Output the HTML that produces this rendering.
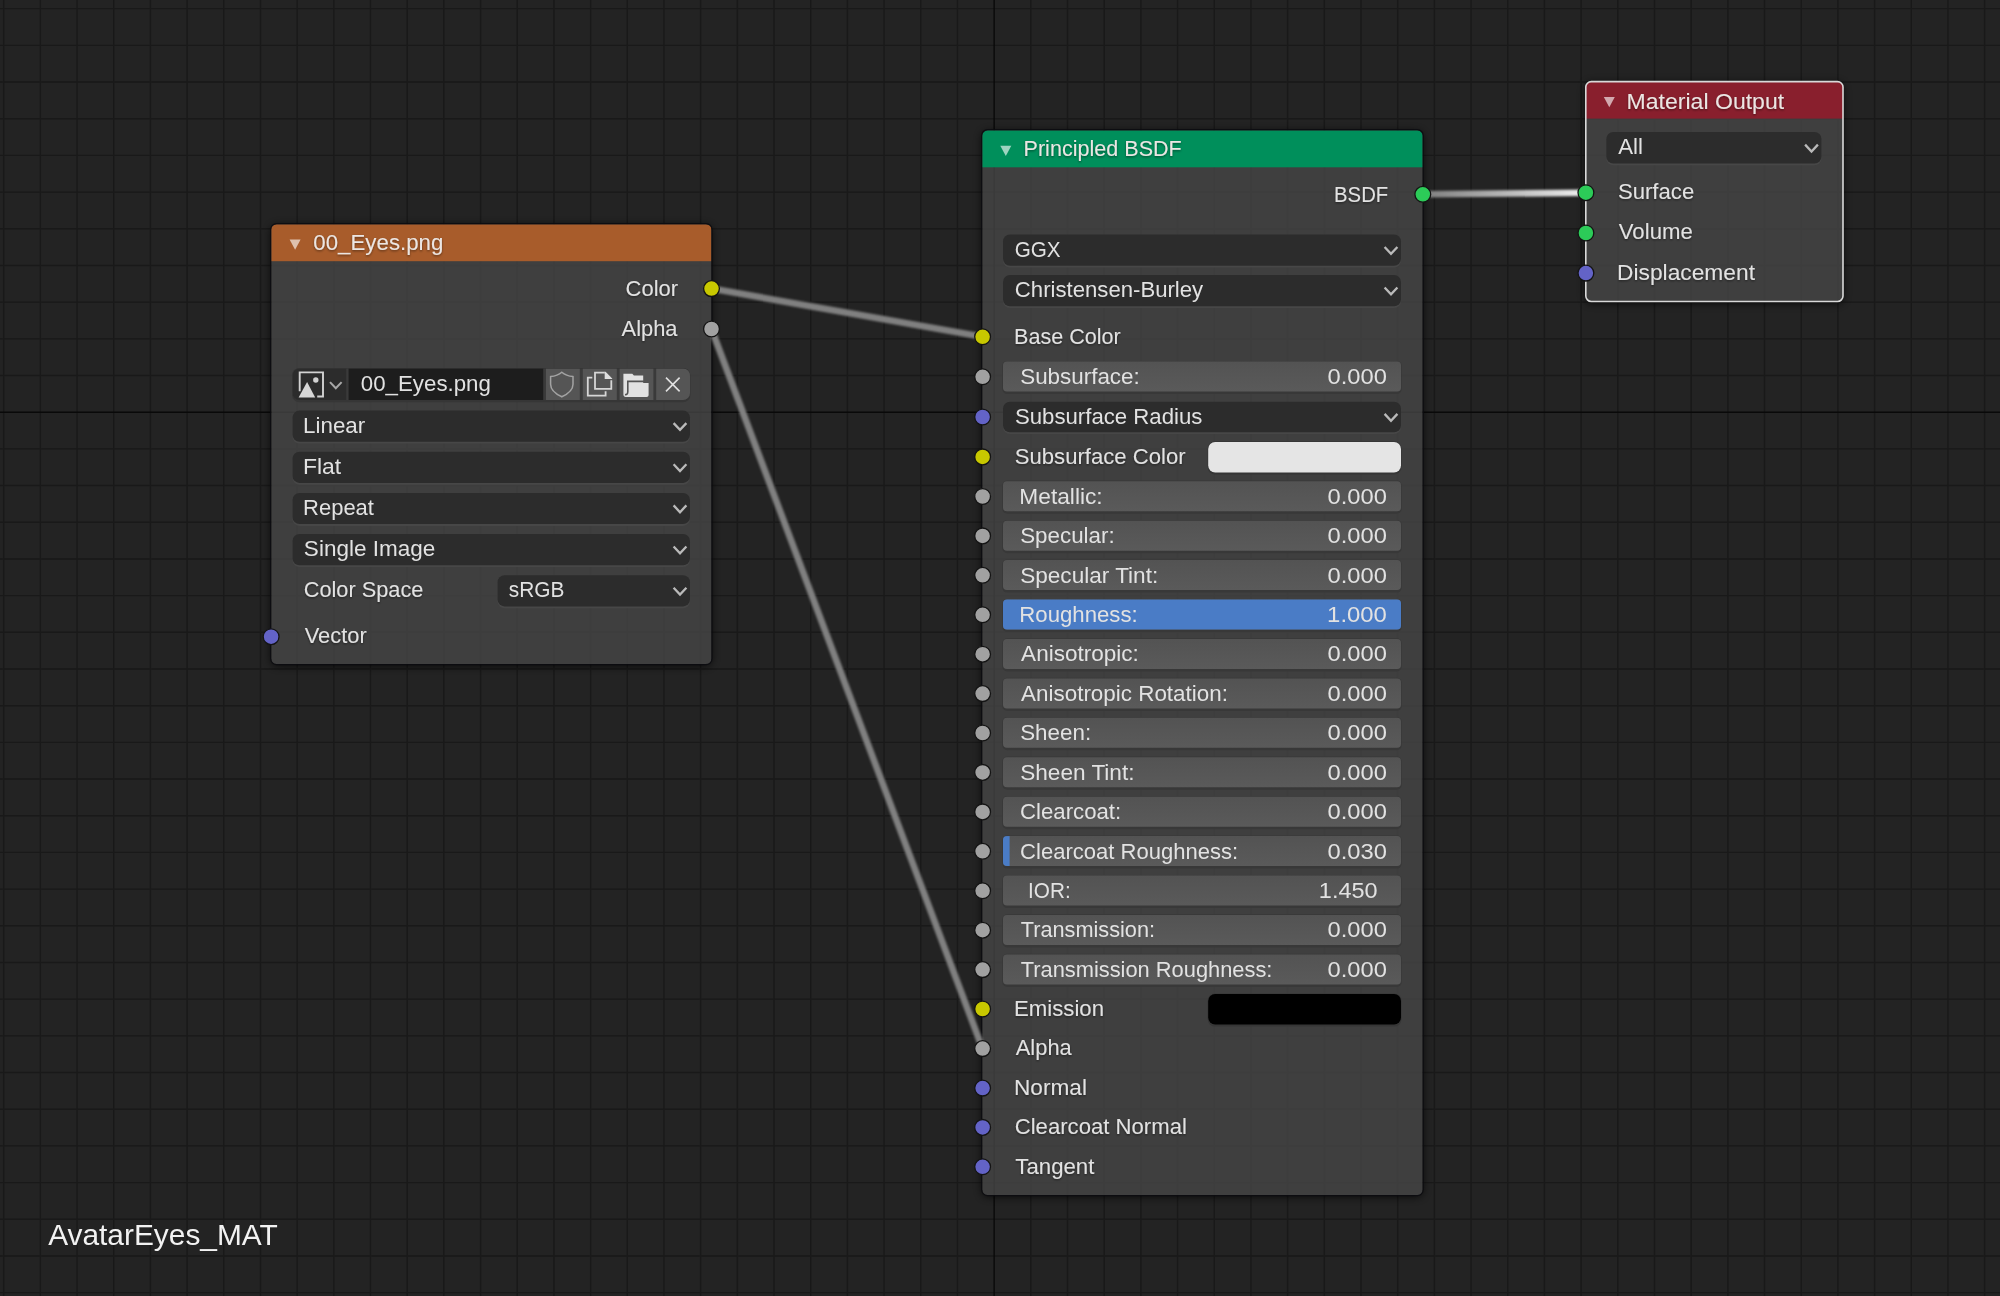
<!DOCTYPE html><html><head><meta charset="utf-8"><title>Blender Node Editor</title><style>html,body{margin:0;padding:0;background:#232323;width:2000px;height:1296px;overflow:hidden;}svg text{font-family:"Liberation Sans",sans-serif;}</style></head><body><svg width="2000" height="1296" viewBox="0 0 2000 1296" style="position:absolute;left:0;top:0;will-change:transform;font-family:'Liberation Sans',sans-serif">
<defs><filter id="ts" x="-10%" y="-30%" width="120%" height="160%"><feDropShadow dx="0" dy="1.2" stdDeviation="1.1" flood-color="#000" flood-opacity="0.45"/></filter><filter id="nsh" x="-10%" y="-10%" width="120%" height="120%"><feGaussianBlur stdDeviation="4"/></filter><filter id="lb" filterUnits="userSpaceOnUse" x="0" y="0" width="2000" height="1296"><feGaussianBlur stdDeviation="0.9"/></filter><linearGradient id="sg" x1="0" y1="0" x2="0" y2="1"><stop offset="0" stop-color="#535353"/><stop offset="1" stop-color="#5a5a5a"/></linearGradient><linearGradient id="lg" x1="1422" y1="0" x2="1586" y2="0" gradientUnits="userSpaceOnUse"><stop offset="0" stop-color="#7d7d7d"/><stop offset="1" stop-color="#f0f0f0"/></linearGradient></defs>
<rect width="2000" height="1296" fill="#232323"/>
<path d="M3.65 0V1296 M40.34 0V1296 M77.02 0V1296 M113.71 0V1296 M150.39 0V1296 M187.08 0V1296 M223.76 0V1296 M260.45 0V1296 M297.13 0V1296 M333.82 0V1296 M370.50 0V1296 M407.19 0V1296 M443.87 0V1296 M480.56 0V1296 M517.24 0V1296 M553.93 0V1296 M590.62 0V1296 M627.30 0V1296 M663.98 0V1296 M700.67 0V1296 M737.36 0V1296 M774.04 0V1296 M810.72 0V1296 M847.41 0V1296 M884.10 0V1296 M920.78 0V1296 M957.46 0V1296 M1030.84 0V1296 M1067.52 0V1296 M1104.20 0V1296 M1140.89 0V1296 M1177.58 0V1296 M1214.26 0V1296 M1250.94 0V1296 M1287.63 0V1296 M1324.32 0V1296 M1361.00 0V1296 M1397.68 0V1296 M1434.37 0V1296 M1471.06 0V1296 M1507.74 0V1296 M1544.43 0V1296 M1581.11 0V1296 M1617.80 0V1296 M1654.48 0V1296 M1691.16 0V1296 M1727.85 0V1296 M1764.53 0V1296 M1801.22 0V1296 M1837.91 0V1296 M1874.59 0V1296 M1911.28 0V1296 M1947.96 0V1296 M1984.64 0V1296 M0 8.66H2000 M0 45.35H2000 M0 82.03H2000 M0 118.72H2000 M0 155.40H2000 M0 192.09H2000 M0 228.77H2000 M0 265.46H2000 M0 302.14H2000 M0 338.83H2000 M0 375.51H2000 M0 448.88H2000 M0 485.57H2000 M0 522.25H2000 M0 558.94H2000 M0 595.62H2000 M0 632.31H2000 M0 669.00H2000 M0 705.68H2000 M0 742.37H2000 M0 779.05H2000 M0 815.74H2000 M0 852.42H2000 M0 889.11H2000 M0 925.79H2000 M0 962.48H2000 M0 999.16H2000 M0 1035.85H2000 M0 1072.53H2000 M0 1109.22H2000 M0 1145.90H2000 M0 1182.59H2000 M0 1219.27H2000 M0 1255.96H2000 M0 1292.64H2000" stroke="#191919" stroke-width="1.4" fill="none"/>
<path d="M994.15 0V1296M0 412.2H2000" stroke="#090909" stroke-width="1.35" fill="none"/>
<mask id="sm271" maskUnits="userSpaceOnUse" x="0" y="0" width="2000" height="1296"><rect width="2000" height="1296" fill="#fff"/><rect x="271.20" y="224.20" width="440.30" height="439.80" rx="5.5" fill="#000"/></mask>
<g mask="url(#sm271)"><rect x="271.20" y="225.70" width="440.30" height="439.80" rx="6" fill="#000" opacity="0.8" filter="url(#nsh)"/></g>
<clipPath id="nc271"><rect x="271.20" y="224.20" width="440.30" height="439.80" rx="5.5"/></clipPath>
<g clip-path="url(#nc271)">
<rect x="271.20" y="224.20" width="440.30" height="439.80" rx="0" fill="rgba(70,70,70,0.8)"/>
<rect x="271.20" y="224.20" width="440.30" height="37.00" rx="0" fill="#a85c2b"/>
</g>
<rect x="270.60" y="223.60" width="441.50" height="441.00" rx="6.1" fill="none" stroke="#0c0c10" stroke-opacity="0.85" stroke-width="1.2"/>
<path d="M289.60 239.60L300.60 239.60L295.10 249.80Z" fill="#ffffff" opacity="0.62"/>
<text x="313.31" y="250.30" font-size="22" text-anchor="start" fill="#ebe6e3" textLength="130.10" lengthAdjust="spacingAndGlyphs" filter="url(#ts)">00_Eyes.png</text>
<text x="678.12" y="296.10" font-size="22" text-anchor="end" fill="#e2e2e2" textLength="52.52" lengthAdjust="spacingAndGlyphs" filter="url(#ts)">Color</text>
<text x="677.55" y="335.70" font-size="22" text-anchor="end" fill="#e2e2e2" textLength="56.00" lengthAdjust="spacingAndGlyphs" filter="url(#ts)">Alpha</text>
<rect x="292.00" y="367.90" width="398.50" height="34.40" rx="7.5" fill="#363636"/>
<clipPath id="imgrow"><rect x="292.5" y="368.4" width="397.5" height="31.6" rx="7"/></clipPath>
<g clip-path="url(#imgrow)">
<rect x="292.50" y="368.40" width="397.50" height="31.60" rx="0" fill="#3a3a3a"/>
<rect x="292.50" y="368.40" width="53.70" height="31.60" rx="0" fill="#2c2c2c"/>
<rect x="348.60" y="368.40" width="194.60" height="31.60" rx="0" fill="#1d1d1d"/>
<rect x="546.00" y="368.40" width="33.80" height="31.60" rx="0" fill="#555555"/>
<rect x="582.80" y="368.40" width="34.00" height="31.60" rx="0" fill="#555555"/>
<rect x="619.60" y="368.40" width="33.80" height="31.60" rx="0" fill="#555555"/>
<rect x="656.20" y="368.40" width="35.80" height="31.60" rx="0" fill="#555555"/>
</g>
<path d="M299.7 391.2V372.4H323.0V396.5H317.2" stroke="#d2d2d2" stroke-width="1.9" fill="none"/>
<path d="M298.6 397.4L307.1 382.0L315.2 397.4Z" fill="#d6d6d6"/>
<circle cx="315.8" cy="380.0" r="2.7" fill="#d2d2d2"/>
<path d="M330.00 382.10L335.80 388.30L341.60 382.10" stroke="#a8a8a8" stroke-width="2.0" fill="none" stroke-linecap="butt" stroke-linejoin="miter"/>
<text x="360.81" y="390.60" font-size="22" text-anchor="start" fill="#e2e2e2" textLength="130.10" lengthAdjust="spacingAndGlyphs">00_Eyes.png</text>
<path d="M561.8 372.3C558.5 375.2 554.5 376.3 550.6 376.6V384.2C550.6 389.5 555.5 393.8 561.8 396.8C568.1 393.8 573.0 389.5 573.0 384.2V376.6C569.1 376.3 565.1 375.2 561.8 372.3Z" stroke="#a3a3a3" stroke-width="1.5" fill="none"/>
<path d="M592.3 377.6H587.8V395.6H605.6V391.2" stroke="#d6d6d6" stroke-width="1.8" fill="none"/>
<path d="M611.3 380.2V388.8H595.0V372.6H604.8" stroke="#d6d6d6" stroke-width="1.8" fill="none"/>
<path d="M604.7 371.8H605.6L612.2 378.6V379.0H604.7Z" fill="#dedede"/>
<path d="M623.4 394.8V373.8H632.3L633.9 375.4H643.2V382.9H648.6V395.0C648.6 396.2 647.8 397.0 646.6 397.0H625.6C624.4 397.0 623.4 396.0 623.4 394.8Z" fill="#e2e2e2"/>
<path d="M648.8 381.4H627.8V391.8C627.8 393.9 626.6 394.9 625.0 394.5" stroke="#555555" stroke-width="1.6" fill="none"/>
<path d="M666.0 377.6L679.6 391.4M679.6 377.6L666.0 391.4" stroke="#e0e0e0" stroke-width="1.6" fill="none"/>
<rect x="292.50" y="412.40" width="397.50" height="31.20" rx="7" fill="#474747"/>
<rect x="292.50" y="410.60" width="397.50" height="31.20" rx="7" fill="#2c2c2c"/>
<text x="303.05" y="432.60" font-size="22" text-anchor="start" fill="#e2e2e2" textLength="62.18" lengthAdjust="spacingAndGlyphs">Linear</text>
<path d="M673.60 423.10L680.00 429.90L686.40 423.10" stroke="#bababa" stroke-width="2.3" fill="none" stroke-linecap="butt" stroke-linejoin="miter"/>
<rect x="292.50" y="453.50" width="397.50" height="31.20" rx="7" fill="#474747"/>
<rect x="292.50" y="451.70" width="397.50" height="31.20" rx="7" fill="#2c2c2c"/>
<text x="303.01" y="473.60" font-size="22" text-anchor="start" fill="#e2e2e2" textLength="38.26" lengthAdjust="spacingAndGlyphs">Flat</text>
<path d="M673.60 464.20L680.00 471.00L686.40 464.20" stroke="#bababa" stroke-width="2.3" fill="none" stroke-linecap="butt" stroke-linejoin="miter"/>
<rect x="292.50" y="494.70" width="397.50" height="31.20" rx="7" fill="#474747"/>
<rect x="292.50" y="492.90" width="397.50" height="31.20" rx="7" fill="#2c2c2c"/>
<text x="303.09" y="514.80" font-size="22" text-anchor="start" fill="#e2e2e2" textLength="70.87" lengthAdjust="spacingAndGlyphs">Repeat</text>
<path d="M673.60 505.40L680.00 512.20L686.40 505.40" stroke="#bababa" stroke-width="2.3" fill="none" stroke-linecap="butt" stroke-linejoin="miter"/>
<rect x="292.50" y="535.80" width="397.50" height="31.20" rx="7" fill="#474747"/>
<rect x="292.50" y="534.00" width="397.50" height="31.20" rx="7" fill="#2c2c2c"/>
<text x="303.89" y="555.90" font-size="22" text-anchor="start" fill="#e2e2e2" textLength="131.32" lengthAdjust="spacingAndGlyphs">Single Image</text>
<path d="M673.60 546.50L680.00 553.30L686.40 546.50" stroke="#bababa" stroke-width="2.3" fill="none" stroke-linecap="butt" stroke-linejoin="miter"/>
<text x="303.71" y="596.80" font-size="22" text-anchor="start" fill="#e2e2e2" textLength="119.73" lengthAdjust="spacingAndGlyphs" filter="url(#ts)">Color Space</text>
<rect x="497.60" y="577.00" width="192.40" height="31.20" rx="7" fill="#474747"/>
<rect x="497.60" y="575.20" width="192.40" height="31.20" rx="7" fill="#2c2c2c"/>
<text x="508.73" y="597.00" font-size="22" text-anchor="start" fill="#e2e2e2" textLength="55.66" lengthAdjust="spacingAndGlyphs">sRGB</text>
<path d="M673.60 587.70L680.00 594.50L686.40 587.70" stroke="#bababa" stroke-width="2.3" fill="none" stroke-linecap="butt" stroke-linejoin="miter"/>
<text x="304.69" y="642.60" font-size="22" text-anchor="start" fill="#e2e2e2" textLength="62.04" lengthAdjust="spacingAndGlyphs" filter="url(#ts)">Vector</text>
<mask id="sm982" maskUnits="userSpaceOnUse" x="0" y="0" width="2000" height="1296"><rect width="2000" height="1296" fill="#fff"/><rect x="982.20" y="130.30" width="440.50" height="1064.80" rx="5.5" fill="#000"/></mask>
<g mask="url(#sm982)"><rect x="982.20" y="131.80" width="440.50" height="1064.80" rx="6" fill="#000" opacity="0.8" filter="url(#nsh)"/></g>
<clipPath id="nc982"><rect x="982.20" y="130.30" width="440.50" height="1064.80" rx="5.5"/></clipPath>
<g clip-path="url(#nc982)">
<rect x="982.20" y="130.30" width="440.50" height="1064.80" rx="0" fill="rgba(70,70,70,0.8)"/>
<rect x="982.20" y="130.30" width="440.50" height="37.00" rx="0" fill="#008f5b"/>
</g>
<rect x="981.60" y="129.70" width="441.70" height="1066.00" rx="6.1" fill="none" stroke="#0c0c10" stroke-opacity="0.85" stroke-width="1.2"/>
<path d="M1000.30 145.70L1011.30 145.70L1005.80 155.90Z" fill="#ffffff" opacity="0.62"/>
<text x="1023.52" y="155.70" font-size="22" text-anchor="start" fill="#ebe6e3" textLength="158.27" lengthAdjust="spacingAndGlyphs" filter="url(#ts)">Principled BSDF</text>
<text x="1388.25" y="201.70" font-size="22" text-anchor="end" fill="#e2e2e2" textLength="54.23" lengthAdjust="spacingAndGlyphs" filter="url(#ts)">BSDF</text>
<rect x="1003.00" y="236.30" width="398.00" height="31.20" rx="7" fill="#474747"/>
<rect x="1003.00" y="234.50" width="398.00" height="31.20" rx="7" fill="#2c2c2c"/>
<text x="1014.67" y="256.60" font-size="22" text-anchor="start" fill="#e2e2e2" textLength="45.90" lengthAdjust="spacingAndGlyphs">GGX</text>
<path d="M1384.60 247.00L1391.00 253.80L1397.40 247.00" stroke="#bababa" stroke-width="2.3" fill="none" stroke-linecap="butt" stroke-linejoin="miter"/>
<rect x="1003.00" y="276.80" width="398.00" height="31.20" rx="7" fill="#474747"/>
<rect x="1003.00" y="275.00" width="398.00" height="31.20" rx="7" fill="#2c2c2c"/>
<text x="1014.89" y="297.00" font-size="22" text-anchor="start" fill="#e2e2e2" textLength="188.29" lengthAdjust="spacingAndGlyphs">Christensen-Burley</text>
<path d="M1384.60 287.50L1391.00 294.30L1397.40 287.50" stroke="#bababa" stroke-width="2.3" fill="none" stroke-linecap="butt" stroke-linejoin="miter"/>
<text x="1014.02" y="343.60" font-size="22" text-anchor="start" fill="#e2e2e2" textLength="106.79" lengthAdjust="spacingAndGlyphs" filter="url(#ts)">Base Color</text>
<rect x="1002.30" y="360.90" width="399.40" height="33.20" rx="5" fill="#383838"/>
<rect x="1003.00" y="361.60" width="398.00" height="30.00" rx="4" fill="url(#sg)"/>
<text x="1020.19" y="384.00" font-size="22" text-anchor="start" fill="#e2e2e2" textLength="119.56" lengthAdjust="spacingAndGlyphs">Subsurface:</text>
<text x="1386.89" y="384.00" font-size="22" text-anchor="end" fill="#e2e2e2" textLength="59.34" lengthAdjust="spacingAndGlyphs">0.000</text>
<rect x="1003.00" y="403.50" width="398.00" height="30.60" rx="7" fill="#474747"/>
<rect x="1003.00" y="401.70" width="398.00" height="30.60" rx="7" fill="#2c2c2c"/>
<text x="1015.00" y="423.80" font-size="22" text-anchor="start" fill="#e2e2e2" textLength="187.36" lengthAdjust="spacingAndGlyphs">Subsurface Radius</text>
<path d="M1384.60 413.90L1391.00 420.70L1397.40 413.90" stroke="#bababa" stroke-width="2.3" fill="none" stroke-linecap="butt" stroke-linejoin="miter"/>
<text x="1014.81" y="463.70" font-size="22" text-anchor="start" fill="#e2e2e2" textLength="170.75" lengthAdjust="spacingAndGlyphs" filter="url(#ts)">Subsurface Color</text>
<rect x="1207.60" y="441.30" width="194.00" height="33.20" rx="7.5" fill="#363636"/>
<rect x="1208.20" y="441.90" width="192.80" height="30.60" rx="7" fill="#e5e5e5"/>
<rect x="1002.30" y="480.60" width="399.40" height="33.20" rx="5" fill="#383838"/>
<rect x="1003.00" y="481.30" width="398.00" height="30.00" rx="4" fill="url(#sg)"/>
<text x="1019.33" y="503.70" font-size="22" text-anchor="start" fill="#e2e2e2" textLength="83.32" lengthAdjust="spacingAndGlyphs">Metallic:</text>
<text x="1386.89" y="503.70" font-size="22" text-anchor="end" fill="#e2e2e2" textLength="59.34" lengthAdjust="spacingAndGlyphs">0.000</text>
<rect x="1002.30" y="520.00" width="399.40" height="33.20" rx="5" fill="#383838"/>
<rect x="1003.00" y="520.70" width="398.00" height="30.00" rx="4" fill="url(#sg)"/>
<text x="1020.19" y="543.10" font-size="22" text-anchor="start" fill="#e2e2e2" textLength="94.51" lengthAdjust="spacingAndGlyphs">Specular:</text>
<text x="1386.89" y="543.10" font-size="22" text-anchor="end" fill="#e2e2e2" textLength="59.34" lengthAdjust="spacingAndGlyphs">0.000</text>
<rect x="1002.30" y="559.40" width="399.40" height="33.20" rx="5" fill="#383838"/>
<rect x="1003.00" y="560.10" width="398.00" height="30.00" rx="4" fill="url(#sg)"/>
<text x="1020.18" y="582.50" font-size="22" text-anchor="start" fill="#e2e2e2" textLength="138.04" lengthAdjust="spacingAndGlyphs">Specular Tint:</text>
<text x="1386.89" y="582.50" font-size="22" text-anchor="end" fill="#e2e2e2" textLength="59.34" lengthAdjust="spacingAndGlyphs">0.000</text>
<rect x="1002.30" y="598.90" width="399.40" height="33.20" rx="5" fill="#383838"/>
<rect x="1003.00" y="599.60" width="398.00" height="30.00" rx="4" fill="url(#sg)"/>
<rect x="1003.00" y="599.60" width="398.00" height="30.00" rx="4" fill="#4a7cc6"/>
<text x="1019.37" y="622.00" font-size="22" text-anchor="start" fill="#e2e2e2" textLength="118.31" lengthAdjust="spacingAndGlyphs">Roughness:</text>
<text x="1386.90" y="622.00" font-size="22" text-anchor="end" fill="#e2e2e2" textLength="59.79" lengthAdjust="spacingAndGlyphs">1.000</text>
<rect x="1002.30" y="638.30" width="399.40" height="33.20" rx="5" fill="#383838"/>
<rect x="1003.00" y="639.00" width="398.00" height="30.00" rx="4" fill="url(#sg)"/>
<text x="1021.14" y="661.40" font-size="22" text-anchor="start" fill="#e2e2e2" textLength="117.68" lengthAdjust="spacingAndGlyphs">Anisotropic:</text>
<text x="1386.89" y="661.40" font-size="22" text-anchor="end" fill="#e2e2e2" textLength="59.34" lengthAdjust="spacingAndGlyphs">0.000</text>
<rect x="1002.30" y="677.70" width="399.40" height="33.20" rx="5" fill="#383838"/>
<rect x="1003.00" y="678.40" width="398.00" height="30.00" rx="4" fill="url(#sg)"/>
<text x="1021.14" y="700.80" font-size="22" text-anchor="start" fill="#e2e2e2" textLength="206.77" lengthAdjust="spacingAndGlyphs">Anisotropic Rotation:</text>
<text x="1386.89" y="700.80" font-size="22" text-anchor="end" fill="#e2e2e2" textLength="59.34" lengthAdjust="spacingAndGlyphs">0.000</text>
<rect x="1002.30" y="717.10" width="399.40" height="33.20" rx="5" fill="#383838"/>
<rect x="1003.00" y="717.80" width="398.00" height="30.00" rx="4" fill="url(#sg)"/>
<text x="1020.19" y="740.20" font-size="22" text-anchor="start" fill="#e2e2e2" textLength="70.91" lengthAdjust="spacingAndGlyphs">Sheen:</text>
<text x="1386.89" y="740.20" font-size="22" text-anchor="end" fill="#e2e2e2" textLength="59.34" lengthAdjust="spacingAndGlyphs">0.000</text>
<rect x="1002.30" y="756.50" width="399.40" height="33.20" rx="5" fill="#383838"/>
<rect x="1003.00" y="757.20" width="398.00" height="30.00" rx="4" fill="url(#sg)"/>
<text x="1020.18" y="779.60" font-size="22" text-anchor="start" fill="#e2e2e2" textLength="114.33" lengthAdjust="spacingAndGlyphs">Sheen Tint:</text>
<text x="1386.89" y="779.60" font-size="22" text-anchor="end" fill="#e2e2e2" textLength="59.34" lengthAdjust="spacingAndGlyphs">0.000</text>
<rect x="1002.30" y="796.00" width="399.40" height="33.20" rx="5" fill="#383838"/>
<rect x="1003.00" y="796.70" width="398.00" height="30.00" rx="4" fill="url(#sg)"/>
<text x="1020.09" y="819.10" font-size="22" text-anchor="start" fill="#e2e2e2" textLength="101.11" lengthAdjust="spacingAndGlyphs">Clearcoat:</text>
<text x="1386.89" y="819.10" font-size="22" text-anchor="end" fill="#e2e2e2" textLength="59.34" lengthAdjust="spacingAndGlyphs">0.000</text>
<rect x="1002.30" y="835.40" width="399.40" height="33.20" rx="5" fill="#383838"/>
<rect x="1003.00" y="836.10" width="398.00" height="30.00" rx="4" fill="url(#sg)"/>
<clipPath id="cl836"><rect x="1003.0" y="836.0999999999999" width="398.0" height="30.0" rx="4"/></clipPath>
<rect x="1003.00" y="836.10" width="6.60" height="30.00" rx="0" fill="#4a7cc6" clip-path="url(#cl836)"/>
<text x="1020.10" y="858.50" font-size="22" text-anchor="start" fill="#e2e2e2" textLength="217.98" lengthAdjust="spacingAndGlyphs">Clearcoat Roughness:</text>
<text x="1386.89" y="858.50" font-size="22" text-anchor="end" fill="#e2e2e2" textLength="59.34" lengthAdjust="spacingAndGlyphs">0.030</text>
<rect x="1002.30" y="874.90" width="399.40" height="33.20" rx="5" fill="#383838"/>
<rect x="1003.00" y="875.60" width="398.00" height="30.00" rx="4" fill="url(#sg)"/>
<text x="1028.08" y="898.00" font-size="22" text-anchor="start" fill="#e2e2e2" textLength="42.60" lengthAdjust="spacingAndGlyphs">IOR:</text>
<text x="1377.58" y="898.00" font-size="22" text-anchor="end" fill="#e2e2e2" textLength="58.74" lengthAdjust="spacingAndGlyphs">1.450</text>
<rect x="1002.30" y="914.30" width="399.40" height="33.20" rx="5" fill="#383838"/>
<rect x="1003.00" y="915.00" width="398.00" height="30.00" rx="4" fill="url(#sg)"/>
<text x="1020.71" y="937.40" font-size="22" text-anchor="start" fill="#e2e2e2" textLength="134.32" lengthAdjust="spacingAndGlyphs">Transmission:</text>
<text x="1386.89" y="937.40" font-size="22" text-anchor="end" fill="#e2e2e2" textLength="59.34" lengthAdjust="spacingAndGlyphs">0.000</text>
<rect x="1002.30" y="953.70" width="399.40" height="33.20" rx="5" fill="#383838"/>
<rect x="1003.00" y="954.40" width="398.00" height="30.00" rx="4" fill="url(#sg)"/>
<text x="1020.71" y="976.80" font-size="22" text-anchor="start" fill="#e2e2e2" textLength="251.68" lengthAdjust="spacingAndGlyphs">Transmission Roughness:</text>
<text x="1386.89" y="976.80" font-size="22" text-anchor="end" fill="#e2e2e2" textLength="59.34" lengthAdjust="spacingAndGlyphs">0.000</text>
<text x="1013.97" y="1015.80" font-size="22" text-anchor="start" fill="#e2e2e2" textLength="90.06" lengthAdjust="spacingAndGlyphs" filter="url(#ts)">Emission</text>
<rect x="1207.60" y="993.40" width="194.00" height="33.20" rx="7.5" fill="#363636"/>
<rect x="1208.20" y="994.00" width="192.80" height="30.60" rx="7" fill="#000000"/>
<text x="1015.75" y="1055.40" font-size="22" text-anchor="start" fill="#e2e2e2" textLength="56.00" lengthAdjust="spacingAndGlyphs" filter="url(#ts)">Alpha</text>
<text x="1013.93" y="1094.90" font-size="22" text-anchor="start" fill="#e2e2e2" textLength="73.00" lengthAdjust="spacingAndGlyphs" filter="url(#ts)">Normal</text>
<text x="1014.69" y="1134.20" font-size="22" text-anchor="start" fill="#e2e2e2" textLength="172.21" lengthAdjust="spacingAndGlyphs" filter="url(#ts)">Clearcoat Normal</text>
<text x="1015.30" y="1173.60" font-size="22" text-anchor="start" fill="#e2e2e2" textLength="79.09" lengthAdjust="spacingAndGlyphs" filter="url(#ts)">Tangent</text>
<mask id="sm1585" maskUnits="userSpaceOnUse" x="0" y="0" width="2000" height="1296"><rect width="2000" height="1296" fill="#fff"/><rect x="1585.80" y="81.60" width="257.20" height="219.90" rx="5.5" fill="#000"/></mask>
<g mask="url(#sm1585)"><rect x="1585.80" y="83.10" width="257.20" height="219.90" rx="6" fill="#000" opacity="0.8" filter="url(#nsh)"/></g>
<clipPath id="nc1585"><rect x="1585.80" y="81.60" width="257.20" height="219.90" rx="5.5"/></clipPath>
<g clip-path="url(#nc1585)">
<rect x="1585.80" y="81.60" width="257.20" height="219.90" rx="0" fill="rgba(70,70,70,0.8)"/>
<rect x="1585.80" y="81.60" width="257.20" height="37.00" rx="0" fill="#891f2d"/>
</g>
<rect x="1585.80" y="81.60" width="257.20" height="219.90" rx="5.5" fill="none" stroke="#d9d9d9" stroke-width="1.6"/>
<path d="M1603.80 97.00L1614.80 97.00L1609.30 107.20Z" fill="#ffffff" opacity="0.62"/>
<text x="1626.60" y="108.90" font-size="22" text-anchor="start" fill="#ebe6e3" textLength="157.56" lengthAdjust="spacingAndGlyphs" filter="url(#ts)">Material Output</text>
<rect x="1606.30" y="133.80" width="215.20" height="31.50" rx="7" fill="#474747"/>
<rect x="1606.30" y="132.00" width="215.20" height="31.50" rx="7" fill="#2c2c2c"/>
<text x="1618.24" y="154.30" font-size="22" text-anchor="start" fill="#e2e2e2" textLength="24.73" lengthAdjust="spacingAndGlyphs">All</text>
<path d="M1805.10 144.65L1811.50 151.45L1817.90 144.65" stroke="#bababa" stroke-width="2.3" fill="none" stroke-linecap="butt" stroke-linejoin="miter"/>
<text x="1617.90" y="198.70" font-size="22" text-anchor="start" fill="#e2e2e2" textLength="76.37" lengthAdjust="spacingAndGlyphs" filter="url(#ts)">Surface</text>
<text x="1618.79" y="239.40" font-size="22" text-anchor="start" fill="#e2e2e2" textLength="74.07" lengthAdjust="spacingAndGlyphs" filter="url(#ts)">Volume</text>
<text x="1617.02" y="280.20" font-size="22" text-anchor="start" fill="#e2e2e2" textLength="137.97" lengthAdjust="spacingAndGlyphs" filter="url(#ts)">Displacement</text>
<g filter="url(#lb)">
<path d="M711.5 288.6L982.7 336.8" stroke="#808080" stroke-width="6.6" stroke-linecap="round"/>
<path d="M711.5 329.0L982.5 1048.6" stroke="#808080" stroke-width="6.6" stroke-linecap="round"/>
<path d="M1422.8 194.3L1585.8 192.8" stroke="url(#lg)" stroke-width="6.6" stroke-linecap="round"/>
</g>
<circle cx="711.50" cy="288.60" r="7.9" fill="#c8c800" stroke="#141414" stroke-width="1.3"/>
<circle cx="711.50" cy="329.00" r="7.9" fill="#a1a1a1" stroke="#141414" stroke-width="1.3"/>
<circle cx="271.10" cy="636.70" r="7.9" fill="#6363c7" stroke="#141414" stroke-width="1.3"/>
<circle cx="1422.80" cy="194.30" r="7.9" fill="#2ccb58" stroke="#141414" stroke-width="1.3"/>
<circle cx="982.60" cy="336.80" r="7.9" fill="#c8c800" stroke="#141414" stroke-width="1.3"/>
<circle cx="982.60" cy="376.80" r="7.9" fill="#a1a1a1" stroke="#141414" stroke-width="1.3"/>
<circle cx="982.60" cy="417.00" r="7.9" fill="#6363c7" stroke="#141414" stroke-width="1.3"/>
<circle cx="982.60" cy="456.90" r="7.9" fill="#c8c800" stroke="#141414" stroke-width="1.3"/>
<circle cx="982.60" cy="496.50" r="7.9" fill="#a1a1a1" stroke="#141414" stroke-width="1.3"/>
<circle cx="982.60" cy="535.90" r="7.9" fill="#a1a1a1" stroke="#141414" stroke-width="1.3"/>
<circle cx="982.60" cy="575.30" r="7.9" fill="#a1a1a1" stroke="#141414" stroke-width="1.3"/>
<circle cx="982.60" cy="614.80" r="7.9" fill="#a1a1a1" stroke="#141414" stroke-width="1.3"/>
<circle cx="982.60" cy="654.20" r="7.9" fill="#a1a1a1" stroke="#141414" stroke-width="1.3"/>
<circle cx="982.60" cy="693.60" r="7.9" fill="#a1a1a1" stroke="#141414" stroke-width="1.3"/>
<circle cx="982.60" cy="733.00" r="7.9" fill="#a1a1a1" stroke="#141414" stroke-width="1.3"/>
<circle cx="982.60" cy="772.40" r="7.9" fill="#a1a1a1" stroke="#141414" stroke-width="1.3"/>
<circle cx="982.60" cy="811.90" r="7.9" fill="#a1a1a1" stroke="#141414" stroke-width="1.3"/>
<circle cx="982.60" cy="851.30" r="7.9" fill="#a1a1a1" stroke="#141414" stroke-width="1.3"/>
<circle cx="982.60" cy="890.80" r="7.9" fill="#a1a1a1" stroke="#141414" stroke-width="1.3"/>
<circle cx="982.60" cy="930.20" r="7.9" fill="#a1a1a1" stroke="#141414" stroke-width="1.3"/>
<circle cx="982.60" cy="969.60" r="7.9" fill="#a1a1a1" stroke="#141414" stroke-width="1.3"/>
<circle cx="982.60" cy="1009.00" r="7.9" fill="#c8c800" stroke="#141414" stroke-width="1.3"/>
<circle cx="982.60" cy="1048.60" r="7.9" fill="#a1a1a1" stroke="#141414" stroke-width="1.3"/>
<circle cx="982.60" cy="1088.10" r="7.9" fill="#6363c7" stroke="#141414" stroke-width="1.3"/>
<circle cx="982.60" cy="1127.40" r="7.9" fill="#6363c7" stroke="#141414" stroke-width="1.3"/>
<circle cx="982.60" cy="1166.80" r="7.9" fill="#6363c7" stroke="#141414" stroke-width="1.3"/>
<circle cx="1585.90" cy="192.70" r="7.9" fill="#2ccb58" stroke="#141414" stroke-width="1.3"/>
<circle cx="1585.90" cy="233.00" r="7.9" fill="#2ccb58" stroke="#141414" stroke-width="1.3"/>
<circle cx="1585.90" cy="273.10" r="7.9" fill="#6363c7" stroke="#141414" stroke-width="1.3"/>
<text x="48.13" y="1245.20" font-size="30" text-anchor="start" fill="#f2f2f2" textLength="229.67" lengthAdjust="spacingAndGlyphs">AvatarEyes_MAT</text>
</svg></body></html>
